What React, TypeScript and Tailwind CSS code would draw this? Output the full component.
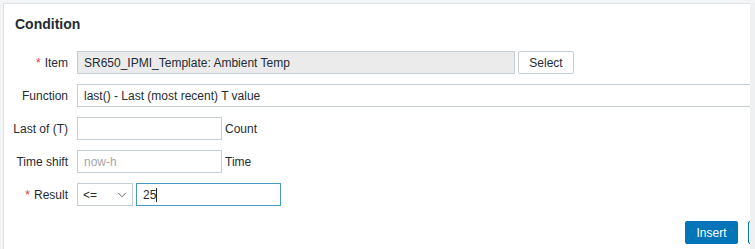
import { ChevronDown } from 'lucide-react'

// ── Form row ──
function Row({ label, required, children }: { label: string; required?: boolean; children: React.ReactNode }) {
  return (
    <div className="flex items-center h-[23px]">
      <div className="w-[64px] shrink-0 text-right">
        {required && <span className="text-[#e33734] mr-[4px]">*</span>}
        {label}
      </div>
      <div className="flex items-center flex-1 min-w-0 ml-[9px] gap-[3px]">{children}</div>
    </div>
  )
}

const inputCls = 'h-[23px] border border-[#c5ced5] px-[6px] text-[12px] text-[#1f2c33] outline-none'

export default function App() {
  return (
    <div
      className="w-[755px] h-[249px] bg-[#f3f4f5] overflow-hidden text-[12px] text-[#1f2c33]"
      style={{ fontFamily: 'Arial, "Liberation Sans", sans-serif' }}
    >
      <div className="flex h-full pt-[3px] pl-[3px]">
        {/* Dialog */}
        <div className="w-[747px] shrink-0 h-full bg-white border-t border-l border-[#dde3e7] flex flex-col overflow-hidden">
          <div className="pl-[11px] pt-[10px] h-[47px] text-[14px] font-bold text-[#1f2c33]">Condition</div>

          <div className="flex flex-col gap-[10px]">
            <Row label="Item" required>
              <div className={`${inputCls} w-[438px] bg-[#ebebeb] flex items-center truncate`}>
                SR650_IPMI_Template: Ambient Temp
              </div>
              <button className="h-[23px] w-[56px] border border-[#c5ced5] rounded-[2px] bg-white text-[12px] text-[#1f2c33]">
                Select
              </button>
            </Row>

            <Row label="Function">
              <div className={`${inputCls} bg-white flex-1 border-r-0 flex items-center`}>
                last() - Last (most recent) T value
              </div>
            </Row>

            <Row label="Last of (T)">
              <input className={`${inputCls} bg-white w-[145px]`} />
              <span>Count</span>
            </Row>

            <Row label="Time shift">
              <input className={`${inputCls} bg-white w-[145px] placeholder:text-[#a7a7a7]`} placeholder="now-h" />
              <span>Time</span>
            </Row>

            <Row label="Result" required>
              <div className={`${inputCls} bg-white w-[56px] flex items-center justify-between pr-[3px] pl-[5px]`}>
                <span>&lt;=</span>
                <ChevronDown size={14} strokeWidth={1.5} className="text-[#555]" />
              </div>
              <div className="h-[23px] w-[145px] border border-[#4796c4] bg-white px-[6px] flex items-center">
                25<span className="inline-block w-px h-[14px] bg-[#1f2c33]" />
              </div>
            </Row>
          </div>

          <div className="flex gap-[10px] mt-[15px] pl-[681px]">
            <button className="h-[23px] w-[53px] shrink-0 rounded-[2px] bg-[#0275b8] text-white text-[12px]">Insert</button>
            {/* Cancel button, cut off by the dialog edge */}
            <button
              aria-label="Cancel"
              className="h-[23px] w-[53px] shrink-0 rounded-[2px] bg-white border border-[#0275b8]"
            />
          </div>
        </div>
        <div className="flex-1 bg-[#eef0f1]" />
      </div>
    </div>
  )
}
